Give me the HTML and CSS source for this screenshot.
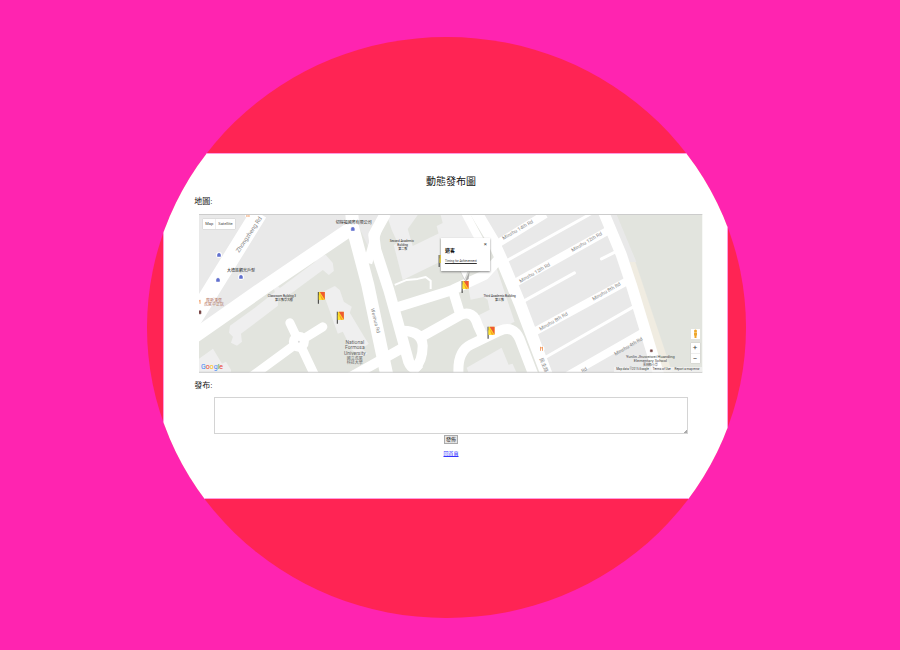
FILE: index.html
```html
<!DOCTYPE html>
<html lang="zh-Hant">
<head>
<meta charset="utf-8">
<meta name="viewport" content="width=device-width, initial-scale=1">
<title>動態發布圖</title>
<link rel="stylesheet" href="styles.css">
</head>
<body>
<div class="disc">
<main class="panel">
  <h1>動態發布圖</h1>
  <h2>地圖:</h2>
  <section class="map" aria-label="地圖">
    <svg class="map-art" viewBox="199 214 504 159">
      <defs>
        <g id="flag">
          <path d="M-3-6h1V6h-1z" fill="#333"/>
          <path d="M-2-6h6V2h-6z" fill="#fbdc2c"/>
          <path d="M-1-6h5V2z" fill="#ee5a32"/>
          <path d="M-1-4L3 2h-2z" fill="#fb9c22"/>
          <path d="M-2-3L1 2h-3z" fill="#ffe52f"/>
        </g>
        <g id="shop">
          <circle r="3" fill="#fff"/>
          <path d="M-1.5-.5h3v2h-3zM-1-.5v-1h2v1" fill="#6270cf" stroke="#6270cf" stroke-width=".6"/>
        </g>
        <g id="food">
          <circle r="3" fill="#fff"/>
          <path d="M-1-2V2M1-2V2M-1-1h2" fill="none" stroke="#f08b48" stroke-width=".8"/>
        </g>
      </defs>
      <path class="campus" d="M199 214h504v159H199z"/>
      <path class="block" d="M199 214h154v14L265 285l-66 47zM353 214h31l-14 36zM482 214h124l55 159H548L499 255zM610 214h7l20 48h-7z"/>
      <path class="sand" d="M630 262h6l37 111h-13z"/>
      <g class="building">
        <path d="M230 326l25-18 20-16-1-3 4-3 2 2 35-26 3-6 8-1 7 8 1 8-5 4-6-5-39 29-6-2v9l-37 28 1 8-5 4-6-3 2-6-4-4z"/>
        <path d="M323 292l12-6 5 4 4 12 8 5-2 6 15 25 4 6-7 5 6 5-7 3-9-7-9-18-5 2z"/>
        <path d="M199 359l14-10 9 15 4-2 5 8v3h-32z"/>
        <path d="M387 215h31l-10 14 5 17 27-13v29l-37 18-9-35 4-2-6-13z"/>
        <path d="M441 215h27l9 24-28 8-9-9-3-12 6-3z"/>
        <path d="M468 283l29-15 18 54-28 13-11-18 14-7-2-10-4-3-13 3z"/>
        <path d="M467 368l35-20 7 17 4-1 4 9h-48z"/>
      </g>
      <g class="road">
        <path stroke-width="17" d="M190 325l19-31 50-81"/>
        <path stroke-width="14" d="M192 338l73-51 87-59"/>
        <path stroke-width="13" d="M352 213l1 15 15 57 19 90"/>
        <path stroke-width="11" d="M386 213l-12 22 2 15 13 40 9 32 11 40q4 10 10 2"/>
        <path stroke-width="9" d="M378 228l-10 35"/>
        <path stroke-width="10" d="M346 380l57-32M396 308l57-18 32-15 18-20M453 290l8 26M400 331q22-1 23 15 0 16-9 24M420 338l41-23q13-5 17 10l6 13M459 376q-2-24 12-31l29-14q14-6 20 8l15 39"/>
        <path stroke-width="12" d="M475 210l18 30 10 22 17 41 28 74"/>
        <path stroke-width="8" d="M464 210l18 34"/>
        <path stroke-width="11" d="M604 212l18 43 10 30 28 92"/>
        <path stroke-width="8" d="M496 245l50-31M517 282l91-51M533 333l95-52M568 376l77-44"/>
        <path stroke-width="3" stroke-linecap="round" d="M505 262l86-48M521 303l54-30M602 259l14-7M547 357l87-50"/>
        <path stroke-width="9" stroke-linecap="round" d="M299 342l-9-19M299 342l24-15M250 378l49-36M299 342l17 36"/>
        <circle class="road-fill" cx="299" cy="342" r="10"/>
        <path stroke-width="2" d="M395 285l12-5 11-1 8-2 5 4v8"/>
      </g>
      <circle cx="299" cy="342" r="1" fill="#ddd"/>
      <g class="street">
        <text class="avenue" transform="translate(239 253) rotate(-56)">Zhongzheng Rd</text>
        <text transform="translate(371 309) rotate(76)">Wenhua Rd</text>
        <text transform="translate(504 240) rotate(-30)">Minzhu 14th Rd</text>
        <text transform="translate(573 252) rotate(-30)">Minzhu 12th Rd</text>
        <text transform="translate(521 283) rotate(-30)">Minzhu 12th Rd</text>
        <text transform="translate(594 301) rotate(-30)">Minzhu 8th Rd</text>
        <text transform="translate(541 331) rotate(-30)">Minzhu 8th Rd</text>
        <text transform="translate(616 356) rotate(-30)">Minzhu 4th Rd</text>
        <text transform="translate(583 373) rotate(-30)">Rd</text>
        <text transform="translate(540 359) rotate(68)">民主路</text>
      </g>
      <g class="place">
        <text x="354" y="224">切得福國際有限公司</text>
        <text x="241" y="272">大德旅觀光戶型</text>
        <g class="hall">
          <text x="282" y="297">Classroom Building 3</text>
          <text x="284" y="301">第三教學大樓</text>
          <text x="402" y="242">Second Academic</text>
          <text x="403" y="246">Building</text>
          <text x="403" y="250">第二教</text>
          <text x="500" y="297">Third Academic Building</text>
          <text x="500" y="301">第三教</text>
        </g>
        <g class="campus-name">
          <text x="355" y="344">National</text>
          <text x="355" y="349">Formosa</text>
          <text x="355" y="355">University</text>
          <text class="small" x="355" y="360">國立虎尾</text>
          <text class="small" x="355" y="364">科技大學</text>
        </g>
        <g class="cafe">
          <text x="214" y="302">摩斯漢堡</text>
          <text x="214" y="306">虎尾中正店</text>
        </g>
        <g class="school">
          <text x="651" y="358">Yunlin Jhuweiwei Huanding</text>
          <text x="651" y="362">Elementary School</text>
          <text class="tiny" x="651" y="366">雲林縣小學</text>
        </g>
      </g>
      <use href="#shop" x="219" y="255"/>
      <use href="#shop" x="218" y="280"/>
      <use href="#shop" x="241" y="277"/>
      <use href="#shop" x="353" y="229"/>
      <use href="#food" x="248" y="215"/>
      <use href="#food" x="199" y="302"/>
      <use href="#food" x="542" y="349"/>
      <path d="M199 311h2v3h-2zM651 350h2v2h-2z" fill="#744" stroke="#744" stroke-width=".5"/>
      <use href="#flag" x="321" y="298"/>
      <use href="#flag" x="340" y="318"/>
      <use href="#flag" x="442" y="261"/>
      <use href="#flag" x="465" y="287"/>
      <use href="#flag" x="491" y="333"/>
      <text class="logo" x="201" y="369"><tspan fill="#4285f4">G</tspan><tspan fill="#ea4335">o</tspan><tspan fill="#fbbc05">o</tspan><tspan fill="#4285f4">g</tspan><tspan fill="#34a853">l</tspan><tspan fill="#ea4335">e</tspan></text>
      <path d="M470 271l-1 8-4 3z" fill="#aaa"/>
      <path d="M460 270l5 10 4-10z" fill="#fff" stroke="#bbb" stroke-width=".5"/>
      <path d="M199 214.500h504M199 372.500h504" stroke="#ccc"/>
    </svg>
    <div class="map-type"><button type="button">Map</button><button type="button">Satellite</button></div>
    <div class="info">
      <button type="button" class="close" aria-label="Close">×</button>
      <strong>遊客</strong>
      <a href="#achievement">Timing for Achievement</a>
    </div>
    <div class="controls">
      <button type="button" aria-label="Street View">
        <svg viewBox="0 0 9 10"><circle cx="4.500" cy="2" r="1.500" fill="#eea72c"/><path d="M3 3.500h3v3H5.500V9h-2V6.500H3z" fill="#eea72c"/></svg>
      </button>
      <div class="zoom">
        <button type="button" aria-label="Zoom in">+</button>
        <button type="button" aria-label="Zoom out">−</button>
      </div>
    </div>
    <div class="credits"><span>Map data ©2015 Google</span><a href="#terms">Terms of Use</a><a href="#report">Report a map error</a></div>
  </section>
  <form class="post">
    <label for="message">發布:</label>
    <textarea id="message"></textarea>
    <button type="button">發佈</button>
    <a href="#home">回首頁</a>
  </form>
</main>
</div>
</body>
</html>
```
FILE: styles.css
```css
* { box-sizing: border-box; }

body {
  margin: 0;
  padding: 37px 7px 31px 0;
  min-height: 100vh;
  background: #ff24b0;
  color: #111;
  font-family: "Liberation Serif", "Noto Sans CJK TC", serif;
}

.disc {
  width: 67%;
  aspect-ratio: 598 / 581;
  margin: 0 auto;
  padding: 116px 18px 0 16px;
  border-radius: 50%;
  overflow: hidden;
  background: #ff2454;
}

.panel {
  padding: 20px 24px 41px 30px;
  background: #fff;
  border: 1px solid #ff9be0;
}

h1, h2, .post label {
  margin: 0;
  font-weight: 400;
  font-size: 8px;
  line-height: 12px;
}

h1 {
  padding-left: 5px;
  font-size: 10px;
  line-height: 16px;
  text-align: center;
}

h2 { margin: 6px 0; }

button { font-family: "Liberation Sans", "Noto Sans CJK TC", sans-serif; }

.map {
  position: relative;
  margin-left: 5px;
  overflow: hidden;
  font-family: Roboto, "Noto Sans CJK TC", sans-serif;
  font-size: 4px;
  line-height: 5px;
}

.map-art {
  display: block;
  width: 100%;
}

.campus { fill: #e2e4de; }
.block { fill: #e9e9e9; }
.sand { fill: #f0ece1; }
.building { fill: #efefef; }
.road { fill: none; stroke: #fff; stroke-linejoin: round; }
.road-fill { fill: #fff; stroke: none; }
.street { fill: #888; font-size: 5px; }
.avenue { font-size: 6px; }
.place { fill: #222; font-size: 4px; text-anchor: middle; }
.hall { font-size: 3px; }
.campus-name { fill: #666; font-size: 5px; }
.cafe { fill: #b0705c; }
.school { fill: #444; }
.place .small { font-size: 4px; }
.place .tiny { font-size: 3px; }
.logo { font-size: 7px; font-weight: 400; }

.map button {
  display: block;
  padding: 0;
  border: 0;
  background: #fff;
  color: #444;
  font-family: inherit;
  font-size: 4px;
  line-height: 10px;
}

.map-type, .info, .controls, .credits { position: absolute; }

.map-type {
  top: 5px;
  left: 4px;
  display: flex;
  box-shadow: 0 0 1px #aaa;
}

.map-type button { padding: 0 2px; }
.map-type button:first-child { border-right: 1px solid #eee; }

.info {
  top: 24px;
  left: 48%;
  width: 49px;
  height: 33px;
  padding: 10px 4px 0;
  background: #fff;
  box-shadow: 0 1px 2px #888;
  white-space: nowrap;
}

.info strong {
  display: block;
  margin-bottom: 6px;
  font-size: 5px;
}

.info a {
  display: block;
  color: #333;
  font-size: 3px;
}

.map .close {
  position: absolute;
  top: 1px;
  right: 3px;
  font-size: 6px;
}

.controls {
  right: 3px;
  bottom: 10px;
  display: grid;
  gap: 4px;
  width: 9px;
}

.map .controls button {
  width: 9px;
  height: 10px;
  font-size: 8px;
}

.controls svg { display: block; }
.zoom { box-shadow: 0 0 1px #aaa; }
.zoom button + button { border-top: 1px solid #eee; }

.credits {
  right: 1px;
  bottom: 1px;
  display: flex;
  gap: 4px;
  padding: 0 2px;
  background: rgb(245 245 245 / 70%);
  color: #333;
  font-size: 3px;
}

.credits a { color: inherit; text-decoration: none; }

.post {
  display: flex;
  flex-direction: column;
  align-items: center;
  padding-top: 7px;
}

.post label { align-self: flex-start; }

.post textarea {
  width: 474px;
  max-width: 94%;
  height: 37px;
  margin: 5px 0 1px 5px;
  border: 1px solid #d4d4d4;
  background: linear-gradient(135deg, #fff 50%, #aaa 50%) right bottom / 3px 3px no-repeat #fff;
  resize: none;
}

.post button {
  width: 14px;
  height: 9px;
  margin-left: 5px;
  padding: 0;
  border: 1px solid #aaa;
  background: #e6e6e6;
  color: #222;
  font-size: 5px;
  line-height: 6px;
}

.post a {
  margin: 6px 0 0 5px;
  color: #33f;
  font-size: 5px;
  line-height: 7px;
}
```
